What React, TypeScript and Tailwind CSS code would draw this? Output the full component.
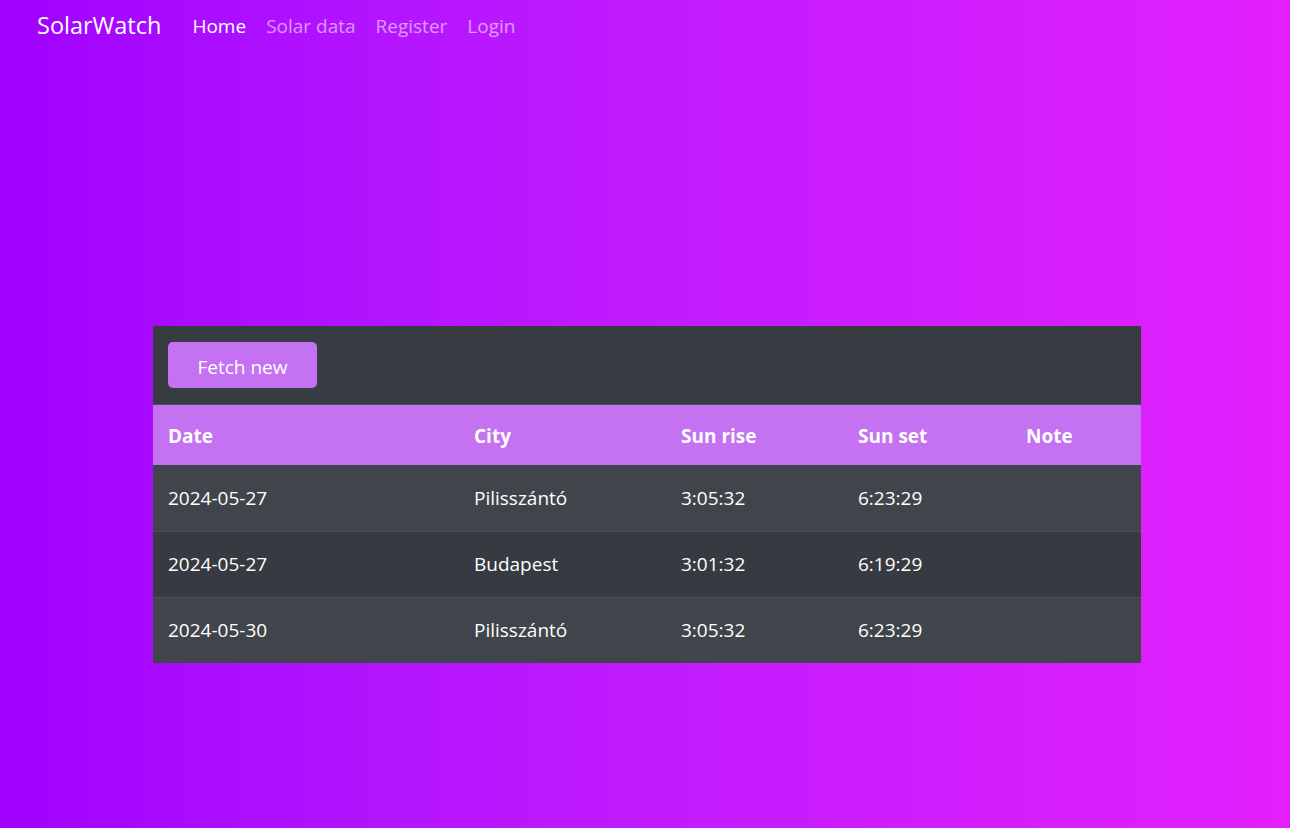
const rows = [
  { date: "2024-05-27", city: "Pilisszántó", rise: "3:05:32", set: "6:23:29" },
  { date: "2024-05-27", city: "Budapest", rise: "3:01:32", set: "6:19:29" },
  { date: "2024-05-30", city: "Pilisszántó", rise: "3:05:32", set: "6:23:29" },
];

const cols = "grid grid-cols-[306px_207px_177px_168px_1fr]";

const App = () => {
  return (
    <div className="min-h-screen w-full bg-linear-to-r from-[#a000ff] to-[#e31ffd] font-['Open_Sans',sans-serif] text-white">
      <nav className="flex h-[52px] items-center pl-[37px]">
        <span className="mr-[31px] text-[23.5px]">SolarWatch</span>
        <ul className="flex gap-[20px] text-[19px]">
          <li className="text-white">Home</li>
          <li className="text-white/55">Solar data</li>
          <li className="text-white/55">Register</li>
          <li className="text-white/55">Login</li>
        </ul>
      </nav>

      <section className="ml-[153px] mt-[274px] w-[988px] text-[19px]">
        <div className="border-b border-[#4b4f56] bg-[#373b42] px-[15px] pt-[16px] pb-[16px]">
          <button className="h-[46px] w-[149px] rounded-[5px] bg-[#c471f2] pt-[4px] text-[19px] text-white">
            Fetch new
          </button>
        </div>

        <div className={`${cols} h-[60px] items-center bg-[#c471f2] pt-[3px] font-bold`}>
          <div className="px-[15px]">Date</div>
          <div className="px-[15px]">City</div>
          <div className="px-[15px]">Sun rise</div>
          <div className="px-[15px]">Sun set</div>
          <div className="px-[15px]">Note</div>
        </div>

        {rows.map((row, i) => (
          <div
            key={i}
            className={`${cols} h-[66px] items-center ${i > 0 ? "border-t border-[#4a4e55]" : ""} ${
              i % 2 === 0 ? "bg-[#40444b]" : "bg-[#363a41]"
            }`}
          >
            <div className="px-[15px]">{row.date}</div>
            <div className="px-[15px]">{row.city}</div>
            <div className="px-[15px]">{row.rise}</div>
            <div className="px-[15px]">{row.set}</div>
            <div className="px-[15px]"></div>
          </div>
        ))}
      </section>
    </div>
  );
};

export default App;
